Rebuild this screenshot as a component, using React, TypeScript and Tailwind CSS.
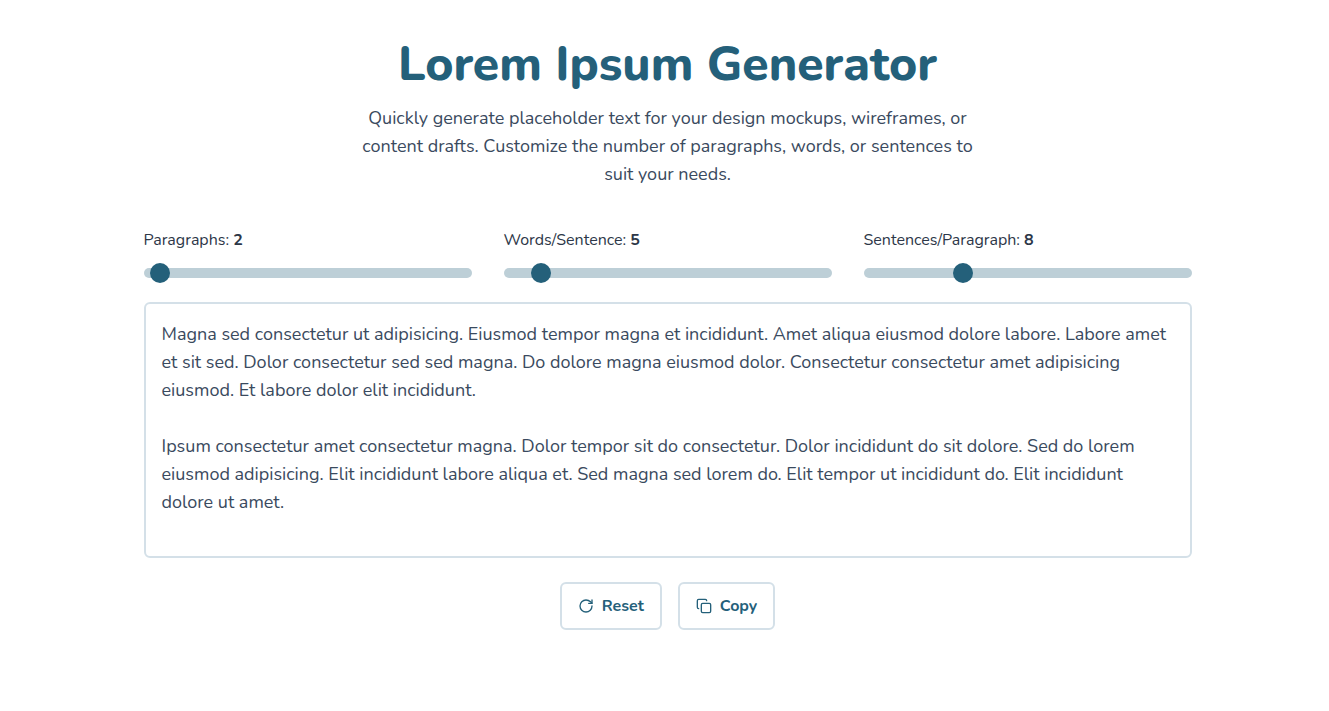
import { RotateCw, Copy } from "lucide-react";

function Slider({ label, value, pos }: { label: string; value: number; pos: number }) {
  return (
    <div className="flex-1">
      <div className="text-[16px] leading-[24px] text-[#2d3748] mb-[16px]">
        {label}: <b>{value}</b>
      </div>
      <div className="relative h-[10px] rounded-full bg-[#bdcfd7]">
        <div
          className="absolute top-[-5px] w-[20px] h-[20px] rounded-full bg-[#24607a]"
          style={{ left: pos }}
        />
      </div>
    </div>
  );
}

export default function App() {
  return (
    <div className="min-h-[711px] bg-white font-['Nunito','Noto_Sans',sans-serif] text-[#2d3748] flex flex-col items-center pt-[32px] pl-[6px]">
      <h1 className="text-[48px] leading-[64px] font-extrabold text-[#24607a]">Lorem Ipsum Generator</h1>
      <p className="mt-[8px] w-[640px] text-center text-[18px] leading-[28px] text-[#3a4a5e]">
        Quickly generate placeholder text for your design mockups, wireframes, or content drafts. Customize the number of paragraphs, words, or sentences to suit your needs.
      </p>
      <div className="w-[1048px] flex gap-[32px] mt-[40px]">
        <Slider label="Paragraphs" value={2} pos={6} />
        <Slider label="Words/Sentence" value={5} pos={27} />
        <Slider label="Sentences/Paragraph" value={8} pos={89} />
      </div>
      <div className="w-[1048px] h-[256px] mt-[24px] border-2 border-[#d4e0e8] rounded-[6px] p-[16px] text-[18px] leading-[28px] text-[#3a4a5e]">
        <p>Magna sed consectetur ut adipisicing. Eiusmod tempor magna et incididunt. Amet aliqua eiusmod dolore labore. Labore amet et sit sed. Dolor consectetur sed sed magna. Do dolore magna eiusmod dolor. Consectetur consectetur amet adipisicing eiusmod. Et labore dolor elit incididunt.</p>
        <p className="mt-[28px]">Ipsum consectetur amet consectetur magna. Dolor tempor sit do consectetur. Dolor incididunt do sit dolore. Sed do lorem eiusmod adipisicing. Elit incididunt labore aliqua et. Sed magna sed lorem do. Elit tempor ut incididunt do. Elit incididunt dolore ut amet.</p>
      </div>
      <div className="flex gap-[16px] mt-[24px]">
        <button className="h-[48px] px-[16px] border-2 border-[#d4e0e8] rounded-[6px] flex items-center gap-[8px] font-bold text-[16px] text-[#24607a]">
          <RotateCw size={16} /> Reset
        </button>
        <button className="h-[48px] px-[16px] border-2 border-[#d4e0e8] rounded-[6px] flex items-center gap-[8px] font-bold text-[16px] text-[#24607a]">
          <Copy size={16} /> Copy
        </button>
      </div>
    </div>
  );
}
